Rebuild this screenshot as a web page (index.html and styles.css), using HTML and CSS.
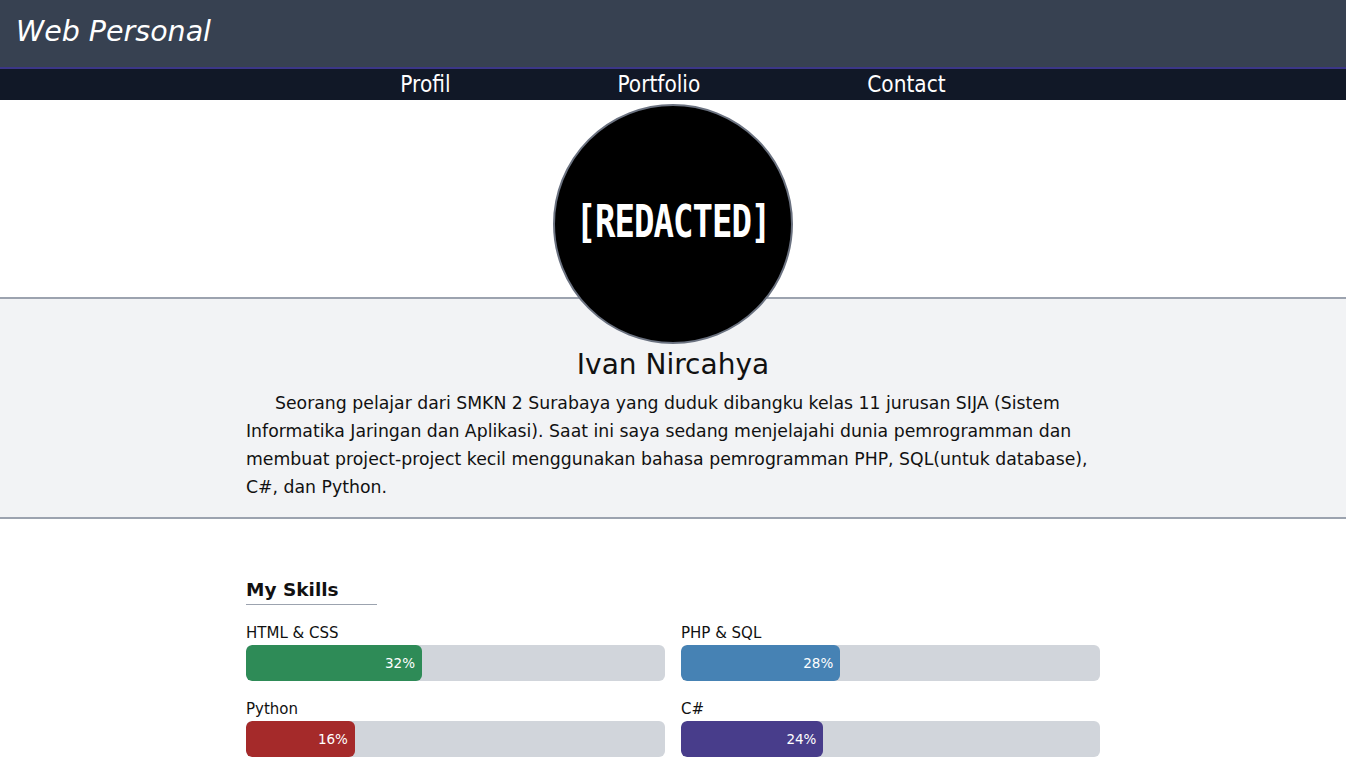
FILE: index.html
```html
<!DOCTYPE html>
<html lang="id">
<head>
<meta charset="utf-8">
<title>Web Personal</title>
<link rel="stylesheet" href="styles.css">
</head>
<body>
<header class="topbar">
  <h1 class="brand">Web Personal</h1>
</header>
<nav class="nav">
  <a href="#profil">Profil</a>
  <a href="#portfolio">Portfolio</a>
  <a href="#contact">Contact</a>
</nav>
<main>
  <section class="hero">
    <div class="avatar"><span>[REDACTED]</span></div>
  </section>
  <section class="about" id="profil">
    <div class="container">
      <h2 class="name">Ivan Nircahya</h2>
      <p class="bio">Seorang pelajar dari SMKN 2 Surabaya yang duduk dibangku kelas 11 jurusan SIJA (Sistem Informatika Jaringan dan Aplikasi). Saat ini saya sedang menjelajahi dunia pemrogramman dan membuat project-project kecil menggunakan bahasa pemrogramman PHP, SQL(untuk database), C#, dan Python.</p>
    </div>
  </section>
  <section class="skills">
    <div class="container">
      <h3 class="skills-title">My Skills</h3>
      <div class="skill-grid">
        <div class="skill">
          <div class="skill-label">HTML &amp; CSS</div>
          <div class="track"><div class="fill green" style="width:42%">32%</div></div>
        </div>
        <div class="skill">
          <div class="skill-label">PHP &amp; SQL</div>
          <div class="track"><div class="fill blue" style="width:38%">28%</div></div>
        </div>
        <div class="skill">
          <div class="skill-label">Python</div>
          <div class="track"><div class="fill red" style="width:26%">16%</div></div>
        </div>
        <div class="skill">
          <div class="skill-label">C#</div>
          <div class="track"><div class="fill purple" style="width:34%">24%</div></div>
        </div>
      </div>
    </div>
  </section>
</main>
</body>
</html>
```

FILE: styles.css
```css
* { box-sizing: border-box; }
html, body { margin: 0; padding: 0; }
body {
  font-family: "DejaVu Sans", sans-serif;
  color: #111;
  background: #fff;
}
.topbar {
  height: 69px;
  background: #374151;
  border-bottom: 2px solid #3b3687;
  display: flex;
  align-items: center;
  padding-left: 16px;
}
.brand {
  margin: 0;
  color: #fff;
  font-family: "DejaVu Sans", sans-serif;
  font-style: italic;
  font-weight: normal;
  font-size: 28.5px;
  transform: translateY(-2px);
}
.nav {
  height: 31px;
  background: #111827;
  display: flex;
  justify-content: center;
  align-items: center;
  gap: 167px;
}
.nav a {
  color: #fff;
  text-decoration: none;
  font-family: "DejaVu Sans Condensed", "DejaVu Sans", sans-serif;
  font-size: 22.4px;
  line-height: 31px;
}
.hero {
  display: flex;
  justify-content: center;
  padding-top: 4px;
}
.avatar {
  position: relative;
  z-index: 1;
  width: 240px;
  height: 240px;
  border-radius: 50%;
  background: #000;
  border: 2px solid #6b7280;
  margin-bottom: -47px;
  display: flex;
  align-items: center;
  justify-content: center;
}
.avatar span {
  color: #fff;
  font-family: "DejaVu Sans Mono", monospace;
  font-weight: bold;
  font-size: 34px;
  letter-spacing: -1px;
  transform: scaleY(1.3);
  margin-top: -6px;
}
.about {
  background: #f2f3f5;
  border-top: 2px solid #9ca3af;
  border-bottom: 2px solid #9ca3af;
  padding: 47px 0 16px;
}
.container {
  width: 854px;
  margin: 0 auto;
}
.name {
  margin: 0 0 5px;
  text-align: center;
  font-weight: normal;
  font-size: 28px;
  line-height: 38px;
}
.bio {
  margin: 0;
  font-size: 17.3px;
  line-height: 28px;
  text-indent: 29px;
  color: #111;
}
.skills {
  padding-top: 58px;
}
.skills-title {
  margin: 0;
  display: inline-block;
  font-size: 18.5px;
  font-weight: bold;
  line-height: 26px;
  padding-right: 38px;
  border-bottom: 1px solid #9ca3af;
  padding-bottom: 1px;
}
.skill-grid {
  display: grid;
  grid-template-columns: 1fr 1fr;
  column-gap: 16px;
  row-gap: 18px;
  margin-top: 18px;
}
.skill-label {
  font-size: 15px;
  line-height: 20px;
  margin-bottom: 2px;
}
.track {
  height: 36px;
  background: #d1d5db;
  border-radius: 6px;
  overflow: hidden;
}
.fill {
  height: 100%;
  border-radius: 6px;
  color: #fff;
  font-size: 13.5px;
  text-align: right;
  padding-right: 7px;
  line-height: 36px;
}
.green { background: #2e8b57; }
.blue { background: #4682b4; }
.red { background: #a52a2a; }
.purple { background: #483d8b; }
```
